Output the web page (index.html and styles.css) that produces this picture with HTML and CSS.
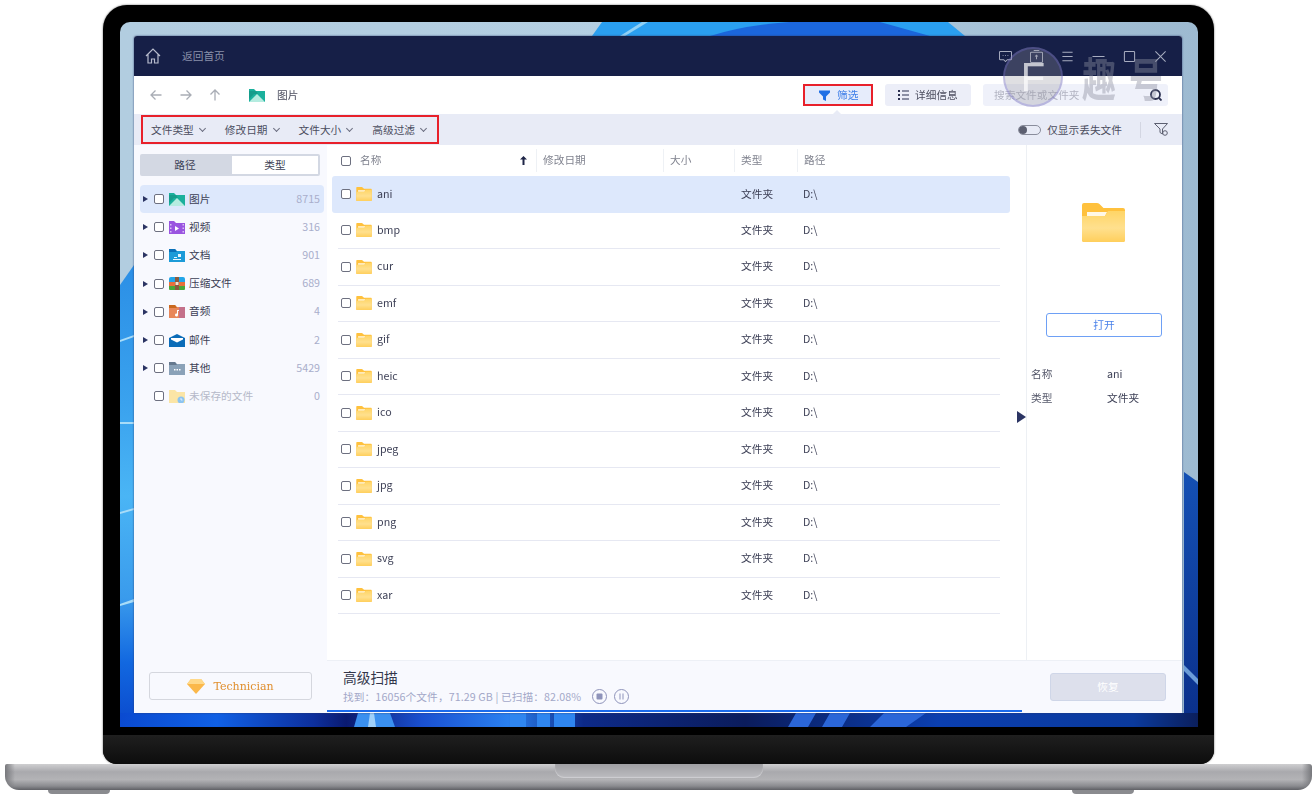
FILE: index.html
```html
<!DOCTYPE html>
<html lang="zh-CN">
  <head>
    <meta charset="UTF-8" />
    <title>高级扫描</title>
    <link rel="stylesheet" href="styles.css">
  </head>
  <body>
    <svg class="defs" width="0" height="0">
      <defs>
        <linearGradient id="folderBody" x1="0" y1="0" x2="0" y2="1">
          <stop offset="0" stop-color="#ffd566" />
          <stop offset="0.55" stop-color="#ffe08e" />
          <stop offset="1" stop-color="#ffcf5c" />
        </linearGradient>
        <symbol id="folder" viewBox="0 0 43 39">
          <path d="M2 0h13q2 0 3.500 2l3 3H41q2 0 2 2v30q0 2-2 2H2q-2 0-2-2V2q0-2 2-2z" fill="#ffc13d" />
          <path d="M5 9h20l-2 4H5z" fill="#fff8e6" />
          <path d="M0 13h23l3-5h17v29q0 2-2 2H2q-2 0-2-2z" fill="url(#folderBody)" />
        </symbol>
        <symbol id="pics" viewBox="0 0 16 13">
          <path d="M0 0h5l2 2h9v11H0z" fill="#1ab09c" />
          <path d="M0 13l8-8 8 8z" fill="#b5ece0" />
          <path d="M0 2h7l2 3H5L0 10z" fill="#128f80" opacity=".6" />
        </symbol>
      </defs>
    </svg>

    <div class="laptop">
      <div class="lid">
        <div class="screen">
          <svg class="wallpaper" viewBox="0 0 1078 705" preserveAspectRatio="none">
            <defs>
              <linearGradient id="wallSky" x1="0" y1="0" x2="1" y2="0">
                <stop offset="0" stop-color="#b2cde0" />
                <stop offset="0.5" stop-color="#b4cfe2" />
                <stop offset="1" stop-color="#9dbad1" />
              </linearGradient>
              <linearGradient id="wallLeft" x1="0" y1="0" x2="0" y2="1">
                <stop offset="0" stop-color="#2b8fe6" />
                <stop offset="0.3" stop-color="#3aa2ee" />
                <stop offset="0.5" stop-color="#4ab5f5" />
                <stop offset="0.72" stop-color="#3a9bec" />
                <stop offset="0.86" stop-color="#1268e0" />
                <stop offset="1" stop-color="#0a48cc" />
              </linearGradient>
              <linearGradient id="wallRight" x1="0" y1="0" x2="0" y2="1">
                <stop offset="0" stop-color="#1450b4" />
                <stop offset="1" stop-color="#0a2f8a" />
              </linearGradient>
              <linearGradient id="wallBottom" x1="0" y1="0" x2="1" y2="0">
                <stop offset="0" stop-color="#0a4ad0" />
                <stop offset="0.09" stop-color="#1060e4" />
                <stop offset="0.18" stop-color="#0d2f9c" />
                <stop offset="0.21" stop-color="#0a1a70" />
                <stop offset="0.28" stop-color="#1a50d0" />
                <stop offset="0.36" stop-color="#2a80f0" />
                <stop offset="0.43" stop-color="#0d2a88" />
                <stop offset="0.58" stop-color="#0b1c5c" />
                <stop offset="0.76" stop-color="#0b3fb0" />
                <stop offset="0.94" stop-color="#0b3a9c" />
                <stop offset="1" stop-color="#0b1f5c" />
              </linearGradient>
            </defs>
            <rect width="1078" height="705" fill="url(#wallSky)" />
            <path d="M482 0H828L845 14H472z" fill="#2a9ff0" />
            <path d="M590 14Q650-6 760 0L810 14z" fill="#1b66dc" />
            <path d="M522 0L500 14h5L528 0z" fill="#8fd0f5" />
            <path d="M0 263L14 243V705H0z" fill="url(#wallLeft)" />
            <path d="M0 318l14-5v2L0 320zM0 400h14v2H0zM0 490l14-4v2L0 492zM0 582l14-5v3L0 584z" fill="#a8dcf8" />
            <path d="M1064 450l14 10v245h-14z" fill="url(#wallRight)" />
            <path d="M1064 643l14 14v6l-14-14z" fill="#6b9cd8" />
            <rect y="691" width="1078" height="14" fill="url(#wallBottom)" />
            <path d="M234 705l4-14h32l5 14z" fill="#3a90f0" />
            <path d="M248 705l2-14h4l2 14z" fill="#9fd0fa" />
            <path d="M390 705v-14h16v14zM417 705v-14h13v14zM434 705v-14h21v14z" fill="#2f86f0" />
            <path d="M668 705l8-14h20l-8 14zM702 705l8-14h20l-8 14zM750 705l14-14h42l-20 14z" fill="#2b66d8" />
          </svg>

          <div class="window">
            <header class="titlebar">
              <svg class="ic-home" viewBox="0 0 16 16"><path d="M1 8l7-7 7 7M3 6.500V15h3.500v-4h3v4H13V6.500" /></svg>
              <span class="back-home">返回首页</span>
              <div class="title-actions">
                <svg viewBox="0 0 14 14"><path d="M1.500 1.500h11q1 0 1 1v7q0 1-1 1H9l-2 2-2-2H1.500q-1 0-1-1v-7q0-1 1-1z" /><path d="M4 6h.8M6.600 6h.8M9.200 6h.8" /></svg>
                <svg viewBox="0 0 14 14"><path d="M1.500 2.500h11q1 0 1 1v9q0 1-1 1h-11q-1 0-1-1v-9q0-1 1-1zM4 .5h6M7 10V5.500M5.500 7L7 5.500 8.500 7" /></svg>
                <svg viewBox="0 0 14 14"><path d="M1.500 2.500h11M1.500 7h11M1.500 11.500h11" /></svg>
                <svg viewBox="0 0 14 14"><path d="M.5 7h13" /></svg>
                <svg viewBox="0 0 14 14"><rect x="1.500" y="1.500" width="11" height="11" rx="1" /></svg>
                <svg viewBox="0 0 14 14"><path d="M1.500 1.500l11 11M12.500 1.500l-11 11" /></svg>
              </div>
            </header>

            <div class="toolbar">
              <svg class="ic-nav" viewBox="0 0 12 12"><path d="M11.500 6H1M5.500 1.500L1 6l4.500 4.500" /></svg>
              <svg class="ic-nav" viewBox="0 0 12 12"><path d="M.5 6H11M6.500 1.500L11 6l-4.500 4.500" /></svg>
              <svg class="ic-nav" viewBox="0 0 12 12"><path d="M6 11.500V1M1.500 5.500L6 1l4.500 4.500" /></svg>
              <svg class="ic-crumb"><use href="#pics" /></svg>
              <span class="crumb">图片</span>
              <button class="tool-btn filter-btn">
                <svg viewBox="0 0 11 11"><path d="M0 .5h11v2L7 6.500V11L4 9.500v-3L0 2.500z" /></svg>
                <span>筛选</span>
              </button>
              <button class="tool-btn detail-btn">
                <svg viewBox="0 0 11 10"><path d="M0 0h2v2H0zM4 .4h7v1.200H4zM0 4h2v2H0zM4 4.400h7v1.200H4zM0 8h2v2H0zM4 8.400h7v1.200H4z" /></svg>
                <span>详细信息</span>
              </button>
              <div class="search">
                <span>搜索文件或文件夹</span>
                <svg viewBox="0 0 12 12"><circle cx="5.500" cy="5.500" r="4.500" /><path d="M9 9l2.500 2.500" /></svg>
              </div>
            </div>

            <div class="filterbar">
              <div class="filter-group">
                <span class="filter-item">文件类型<i class="chev"></i></span>
                <span class="filter-item">修改日期<i class="chev"></i></span>
                <span class="filter-item">文件大小<i class="chev"></i></span>
                <span class="filter-item">高级过滤<i class="chev"></i></span>
              </div>
              <div class="lost-toggle"><i class="switch"></i>仅显示丢失文件</div>
              <span class="vline"></span>
              <svg class="ic-clear" viewBox="0 0 14 13"><path d="M.5.500h13L8.500 6v5L6 9.500V6z" /><circle cx="11" cy="10" r="2.300" /></svg>
            </div>

            <div class="main">
              <aside class="sidebar">
                <div class="segment"><span class="seg-off">路径</span><span class="seg-on">类型</span></div>
                <ul class="tree">
                  <li class="tree-row active">
                    <i class="caret"></i><i class="check"></i>
                    <svg class="cat"><use href="#pics" /></svg>
                    <span class="cat-name">图片</span><span class="count">8715</span>
                  </li>
                  <li class="tree-row">
                    <i class="caret"></i><i class="check"></i>
                    <svg class="cat" viewBox="0 0 16 13"><path d="M0 0h5l2 2h9v11H0z" fill="#9a55e0" /><path d="M6 5l4 2.500L6 10z" fill="#fff" /><path d="M1 3h1.500v1.500H1zM1 6.500h1.500V8H1zM1 10h1.500v1.500H1zM13.500 3H15v1.500h-1.500zM13.500 6.500H15V8h-1.500zM13.500 10H15v1.500h-1.500z" fill="#d9c0f5" /></svg>
                    <span class="cat-name">视频</span><span class="count">316</span>
                  </li>
                  <li class="tree-row">
                    <i class="caret"></i><i class="check"></i>
                    <svg class="cat" viewBox="0 0 16 13"><path d="M0 0h6l2 2h8v11H0z" fill="#1c9bd8" /><path d="M0 0h6l2 3H0z" fill="#0b70b8" /><path d="M9 5h3v3H9zM5 8h3v1H5zM4 10h8v1H4z" fill="#e6f6ff" /></svg>
                    <span class="cat-name">文档</span><span class="count">901</span>
                  </li>
                  <li class="tree-row">
                    <i class="caret"></i><i class="check"></i>
                    <svg class="cat" viewBox="0 0 16 13"><path d="M0 2q0-2 2-2h12q2 0 2 2v3H0z" fill="#22a5e8" /><rect y="5" width="16" height="4" fill="#e8703a" /><path d="M0 9h16v3q0 1-1 1H1q-1 0-1-1z" fill="#4aa838" /><rect x="6" width="4" height="13" fill="#8a5a3c" /><rect x="6.500" y="5" width="3" height="3" fill="#f2e3cf" /></svg>
                    <span class="cat-name">压缩文件</span><span class="count">689</span>
                  </li>
                  <li class="tree-row">
                    <i class="caret"></i><i class="check"></i>
                    <svg class="cat" viewBox="0 0 16 13"><path d="M0 0h6l2 2h8v11H0z" fill="#e8875a" /><path d="M0 0h6l2 3H0z" fill="#c9691f" /><rect x="10" y="2" width="6" height="11" fill="#c4708a" /><path d="M8 5h2v1H9v4a1.500 1.500 0 1 1-1-1.400z" fill="#fff" /></svg>
                    <span class="cat-name">音频</span><span class="count">4</span>
                  </li>
                  <li class="tree-row">
                    <i class="caret"></i><i class="check"></i>
                    <svg class="cat" viewBox="0 0 16 13"><path d="M0 4l8-4 8 4v9H0z" fill="#0b6cb8" /><path d="M2 4h12v1.500L8 8.500 2 5.500z" fill="#fff" /></svg>
                    <span class="cat-name">邮件</span><span class="count">2</span>
                  </li>
                  <li class="tree-row">
                    <i class="caret"></i><i class="check"></i>
                    <svg class="cat" viewBox="0 0 16 13"><path d="M0 0h6l2 2h8v11H0z" fill="#8ba2b8" /><path d="M0 0h6l2 3H0z" fill="#66798f" /><path d="M5 7h1.500v1.500H5zM7.500 7H9v1.500H7.500zM10 7h1.500v1.500H10z" fill="#fff" /></svg>
                    <span class="cat-name">其他</span><span class="count">5429</span>
                  </li>
                  <li class="tree-row unsaved">
                    <i class="caret none"></i><i class="check"></i>
                    <svg class="cat" viewBox="0 0 16 13"><path d="M0 0h6l2 2h8v11H0z" fill="#fbe5a6" /><circle cx="12" cy="10" r="3.500" fill="#8cc4f0" /><path d="M12 8v2h1.500" stroke="#fff" stroke-width=".7" fill="none" /></svg>
                    <span class="cat-name">未保存的文件</span><span class="count">0</span>
                  </li>
                </ul>
                <button class="tech-btn">
                  <svg viewBox="0 0 18 15"><path d="M4 0h10l4 5-9 10L0 5z" fill="#fbb84a" /><path d="M4 0h10l4 5H0z" fill="#ffd98a" /></svg>
                  Technician
                </button>
              </aside>

              <section class="listing">
                <div class="table-head">
                  <div class="th th-name">
                    <i class="check"></i><span>名称</span>
                    <svg class="sort" viewBox="0 0 7 9"><path d="M3.500 0L7 3.500H4.500V9h-2V3.500H0z" /></svg>
                  </div>
                  <div class="th th-date">修改日期</div>
                  <div class="th th-size">大小</div>
                  <div class="th th-type">类型</div>
                  <div class="th th-path">路径</div>
                </div>
                <ul class="rows">
                  <li class="row active"><i class="check"></i><svg class="fld"><use href="#folder" /></svg><span class="name">ani</span><span class="type">文件夹</span><span class="path">D:\</span></li>
                  <li class="row"><i class="check"></i><svg class="fld"><use href="#folder" /></svg><span class="name">bmp</span><span class="type">文件夹</span><span class="path">D:\</span></li>
                  <li class="row"><i class="check"></i><svg class="fld"><use href="#folder" /></svg><span class="name">cur</span><span class="type">文件夹</span><span class="path">D:\</span></li>
                  <li class="row"><i class="check"></i><svg class="fld"><use href="#folder" /></svg><span class="name">emf</span><span class="type">文件夹</span><span class="path">D:\</span></li>
                  <li class="row"><i class="check"></i><svg class="fld"><use href="#folder" /></svg><span class="name">gif</span><span class="type">文件夹</span><span class="path">D:\</span></li>
                  <li class="row"><i class="check"></i><svg class="fld"><use href="#folder" /></svg><span class="name">heic</span><span class="type">文件夹</span><span class="path">D:\</span></li>
                  <li class="row"><i class="check"></i><svg class="fld"><use href="#folder" /></svg><span class="name">ico</span><span class="type">文件夹</span><span class="path">D:\</span></li>
                  <li class="row"><i class="check"></i><svg class="fld"><use href="#folder" /></svg><span class="name">jpeg</span><span class="type">文件夹</span><span class="path">D:\</span></li>
                  <li class="row"><i class="check"></i><svg class="fld"><use href="#folder" /></svg><span class="name">jpg</span><span class="type">文件夹</span><span class="path">D:\</span></li>
                  <li class="row"><i class="check"></i><svg class="fld"><use href="#folder" /></svg><span class="name">png</span><span class="type">文件夹</span><span class="path">D:\</span></li>
                  <li class="row"><i class="check"></i><svg class="fld"><use href="#folder" /></svg><span class="name">svg</span><span class="type">文件夹</span><span class="path">D:\</span></li>
                  <li class="row"><i class="check"></i><svg class="fld"><use href="#folder" /></svg><span class="name">xar</span><span class="type">文件夹</span><span class="path">D:\</span></li>
                </ul>
                <i class="collapse"></i>
              </section>

              <aside class="preview">
                <svg class="big-folder"><use href="#folder" /></svg>
                <button class="open-btn"><span>打开</span></button>
                <dl class="props">
                  <dt>名称</dt><dd>ani</dd>
                  <dt>类型</dt><dd>文件夹</dd>
                </dl>
              </aside>

              <footer class="statusbar">
                <div class="scan-info">
                  <div class="scan-title">高级扫描</div>
                  <div class="scan-line">
                    <span>找到：16056个文件，71.29 GB | 已扫描：82.08%</span>
                    <svg viewBox="0 0 15 15"><circle cx="7.500" cy="7.500" r="7" /><rect x="4.500" y="4.500" width="6" height="6" rx="1" class="fill" /></svg>
                    <svg viewBox="0 0 15 15"><circle cx="7.500" cy="7.500" r="7" /><path d="M6 4.500v6M9 4.500v6" /></svg>
                  </div>
                </div>
                <button class="recover-btn"><span>恢复</span></button>
                <div class="progress"></div>
              </footer>
            </div>

            <div class="watermark">
              <span class="wm-circle">F</span>
              <span class="wm-text">趣</span>
              <span class="wm-text">号</span>
            </div>
          </div>
        </div>
        <div class="chin"></div>
      </div>
      <div class="base"><div class="notch"></div></div>
      <div class="feet"><i></i><i></i></div>
    </div>
  </body>
</html>
```

FILE: styles.css
```css
* {
  box-sizing: border-box;
}
html,
body {
  margin: 0;
  padding: 0;
}
body {
  width: 1316px;
  height: 802px;
  overflow: hidden;
  background: #fff;
  font-family: "Noto Sans CJK SC", "Noto Sans", sans-serif;
  font-size: 10.700px;
  color: #3c3f55;
}
ul,
dl,
dd {
  margin: 0;
  padding: 0;
  list-style: none;
}
button {
  font: inherit;
  padding: 0;
}
.defs {
  position: absolute;
}

/* laptop shell */
.laptop {
  padding: 5px 4px 0 5px;
}
.lid {
  width: 1111px;
  height: 759px;
  margin-left: 98px;
  padding: 17px 16px 0 17px;
  background: #000;
  border-radius: 24px 24px 14px 14px;
  box-shadow: 0 0 2px #555;
}
.screen {
  position: relative;
  width: 1078px;
  height: 705px;
  padding: 14px 16px 14px 14px;
  border-radius: 10px 10px 0 0;
  overflow: hidden;
}
.wallpaper {
  position: absolute;
  top: 0;
  left: 0;
  width: 1078px;
  height: 705px;
}
.chin {
  height: 29px;
  margin: 8px -16px 0 -17px;
  background: linear-gradient(#1f1f1f, #0d0d0d);
  border-radius: 0 0 14px 14px;
}
.base {
  display: flex;
  justify-content: center;
  height: 26px;
  background:
    linear-gradient(90deg, #77787c, rgba(255, 255, 255, 0) 10px, rgba(255, 255, 255, 0) 1297px, #77787c),
    linear-gradient(#cfcfd1, #a9a9ad 30%, #b3b3b6 60%, #8a8b8f 85%, #5f6065);
  border-radius: 2px 3px 14px 14px;
}
.notch {
  width: 208px;
  height: 14px;
  background: linear-gradient(#a0a0a4, #bcbcc0);
  border-radius: 0 0 9px 9px;
  box-shadow: inset 0 -1px 1px #d0d0d3;
}
.feet {
  display: flex;
  justify-content: space-between;
  padding: 0 178px 0 43px;
}
.feet i {
  width: 62px;
  height: 4px;
  background: #8a8b8f;
  border-radius: 0 0 8px 8px;
}

/* app window */
.window {
  position: relative;
  display: flex;
  flex-direction: column;
  width: 1048px;
  height: 677px;
  background: #fff;
  border-radius: 3px;
  box-shadow: 0 0 2px #2c3a6e;
  filter: blur(0.3px);
}
.titlebar {
  display: flex;
  align-items: center;
  height: 40px;
  padding: 0 15px 0 11px;
  background: #161f47;
  border-radius: 3px 3px 0 0;
  color: #8990aa;
}
.ic-home {
  width: 16px;
  height: 16px;
  fill: none;
  stroke: #b8bccd;
  stroke-width: 1.200;
}
.back-home {
  margin: -2px 0 0 21px;
}
.title-actions {
  display: flex;
  align-items: center;
  gap: 18px;
  margin-left: auto;
}
.title-actions svg {
  width: 13px;
  height: 13px;
  fill: none;
  stroke: #a8adc0;
  stroke-width: 1.100;
}
.toolbar {
  display: flex;
  align-items: center;
  height: 38px;
  padding: 0 14px 0 16px;
}
.ic-nav {
  width: 12px;
  height: 12px;
  margin-right: 17.500px;
  fill: none;
  stroke: #a9adb5;
  stroke-width: 1.300;
}
.ic-crumb {
  width: 16px;
  height: 13px;
  margin-left: 10.500px;
}
.crumb {
  margin: -2px 0 0 12px;
  color: #4b4d5e;
}
.tool-btn {
  display: flex;
  align-items: center;
  height: 22px;
  border: 0;
  border-radius: 3px;
  color: #4b4d5e;
}
.tool-btn span {
  margin-top: -2px;
}
.filter-btn {
  width: 70px;
  margin-left: auto;
  padding-left: 14px;
  gap: 7px;
  background: #e6ecfb;
  border: 2px solid #e8202a;
  border-radius: 0;
  color: #3f7fe8;
}
.filter-btn svg {
  width: 11px;
  height: 11px;
  fill: #1f6fe5;
}
.filter-btn::after {
  content: "";
  position: absolute;
  top: 74px;
  left: 698px;
  border: 5px solid transparent;
  border-top: 0;
  border-bottom-color: #e8ebf6;
}
.detail-btn {
  width: 86px;
  margin-left: 12px;
  padding-left: 13px;
  gap: 6px;
  background: #eceef8;
}
.detail-btn svg {
  width: 11px;
  height: 10px;
  fill: #2b3050;
}
.search {
  display: flex;
  align-items: center;
  justify-content: space-between;
  width: 185px;
  height: 22px;
  margin-left: 12px;
  padding: 0 6px 0 11px;
  background: #eff1fa;
  border-radius: 3px;
  color: #b2b4c2;
}
.search span {
  margin-top: -2px;
}
.search svg {
  width: 12px;
  height: 12px;
  fill: none;
  stroke: #2b3050;
  stroke-width: 1.800;
}
.filterbar {
  display: flex;
  align-items: center;
  height: 31px;
  padding: 0 14px 0 7px;
  background: #e8ebf6;
}
.filter-group {
  display: flex;
  align-items: center;
  gap: 19px;
  width: 298px;
  height: 29px;
  padding-left: 8px;
  border: 2px solid #e8202a;
}
.filter-item {
  display: flex;
  align-items: center;
  gap: 5px;
  color: #4b4d5e;
}
.chev {
  width: 5px;
  height: 5px;
  margin: -3px 1px 0 1px;
  border-right: 1px solid #6b6e80;
  border-bottom: 1px solid #6b6e80;
  transform: rotate(45deg);
}
.lost-toggle {
  display: flex;
  align-items: center;
  gap: 6px;
  margin-left: auto;
  color: #4b4d5e;
}
.switch {
  position: relative;
  width: 23px;
  height: 10px;
  border: 1px solid #8a8d9c;
  border-radius: 5px;
}
.switch::before {
  content: "";
  position: absolute;
  top: 0;
  left: 0;
  width: 8px;
  height: 8px;
  background: #5c5f70;
  border-radius: 50%;
}
.vline {
  width: 1px;
  height: 16px;
  margin: 0 13px 0 18px;
  background: #d3d6e2;
}
.ic-clear {
  width: 14px;
  height: 13px;
  fill: none;
  stroke: #5c5f70;
  stroke-width: 1;
}

/* main area */
.main {
  position: relative;
  display: grid;
  flex: 1;
  grid-template-columns: 193px 699px 156px;
  grid-template-rows: 515px 53px;
  min-height: 0;
}
.sidebar {
  display: flex;
  flex-direction: column;
  grid-row: 1 / 3;
  padding: 9px 3px 0 6px;
  background: #f8f9fe;
}
.segment {
  display: flex;
  width: 180px;
  height: 22px;
  border: 2px solid #d3d8e3;
  border-radius: 2px;
  text-align: center;
  line-height: 18px;
}
.seg-off {
  width: 90px;
  padding-right: 4px;
  background: #d3d8e3;
}
.seg-on {
  flex: 1;
  background: #fff;
}
.tree {
  margin-top: 9px;
}
.tree-row {
  display: flex;
  align-items: center;
  height: 28.200px;
  padding: 0 4px 0 3px;
  color: #3c3f55;
  border-radius: 4px;
}
.tree-row.active {
  background: #dde8fc;
}
.cat-name,
.count {
  margin-top: -2px;
}
.caret {
  width: 0;
  height: 0;
  border-left: 5px solid #2b3463;
  border-top: 3.500px solid transparent;
  border-bottom: 3.500px solid transparent;
}
.caret.none {
  border-left-color: transparent;
}
.check {
  flex: none;
  width: 10px;
  height: 10px;
  background: #fff;
  border: 1px solid #6d7080;
  border-radius: 2px;
}
.tree-row .check {
  margin-left: 6px;
}
.cat {
  width: 16px;
  height: 13px;
  margin: 0 4px 0 5px;
}
.count {
  margin-left: auto;
  color: #a9aecb;
}
.unsaved .cat-name {
  color: #b6b9c9;
}
.tech-btn {
  display: flex;
  align-items: center;
  justify-content: center;
  gap: 8px;
  width: 163px;
  height: 28px;
  margin: auto 0 13px 9px;
  background: transparent;
  border: 1px solid #d5d7de;
  border-radius: 3px;
  font-family: "DejaVu Serif", "Liberation Serif", serif;
  font-size: 11px;
  color: #e08f2e;
}
.tech-btn svg {
  width: 18px;
  height: 15px;
}
.listing {
  position: relative;
  padding: 4px 0 0 5px;
}
.table-head {
  display: flex;
  height: 27px;
  color: #80838f;
}
.th {
  display: flex;
  align-items: center;
  height: 23px;
  padding: 0 0 2px 6px;
  border-right: 1px solid #eef1f5;
}
.th-name {
  width: 205px;
  padding-left: 9px;
}
.th-name span {
  margin-left: 9px;
}
.th-name .check {
  margin-top: 2px;
}
.th-date {
  width: 127px;
}
.th-size {
  width: 71px;
}
.th-type {
  width: 63px;
}
.th-path {
  flex: none;
  width: 60px;
  border: 0;
}
.sort {
  width: 7px;
  height: 9px;
  margin: 2px 9px 0 auto;
  fill: #1e2547;
}
.rows {
  width: 678px;
}
.row {
  display: flex;
  align-items: center;
  height: 36.500px;
  margin-right: 10px;
  margin-left: 6px;
  border-bottom: 1px solid #e6e8f2;
  color: #3c3f55;
}
.row .check {
  margin-left: 3px;
}
.row.active {
  margin: 0;
  padding-left: 6px;
  border: 0;
  border-radius: 3px;
  background: #dde8fc;
}
.fld {
  width: 16px;
  height: 14px;
  margin-left: 5px;
}
.name,
.type,
.path {
  margin-top: -2px;
}
.name {
  width: 364px;
  margin-left: 5px;
}
.type {
  width: 62px;
}
.collapse {
  position: absolute;
  top: 266px;
  right: 0;
  border-left: 9px solid #2b3463;
  border-top: 6px solid transparent;
  border-bottom: 6px solid transparent;
}
.preview {
  display: flex;
  flex-direction: column;
  border-left: 1px solid #edf0f4;
  padding-top: 58px;
}
.big-folder {
  width: 43px;
  height: 39px;
  margin-left: 55px;
}
.open-btn {
  width: 116px;
  height: 24px;
  margin: 71px 0 0 19px;
  background: #fff;
  border: 1px solid #6ea0f5;
  border-radius: 3px;
  color: #4a82ea;
}
.open-btn span,
.recover-btn span {
  position: relative;
  top: -1px;
}
.props {
  display: grid;
  grid-template-columns: 76px 1fr;
  row-gap: 8px;
  margin: 29px 0 0 4px;
  line-height: 16px;
}
.props dt {
  color: #55586a;
}
.statusbar {
  position: relative;
  display: flex;
  justify-content: space-between;
  grid-column: 2 / 4;
  padding: 7px 16px 0 16px;
  background: #f8f9fe;
  border-top: 1px solid #edf0f6;
}
.scan-title {
  font-size: 13.700px;
  line-height: 18px;
  color: #33364a;
}
.scan-line {
  display: flex;
  align-items: center;
  gap: 7px;
  margin-top: 3px;
  letter-spacing: 0.100px;
  color: #a3a8c8;
}
.scan-line svg {
  width: 15px;
  height: 15px;
  fill: none;
  stroke: #8e93ba;
  stroke-width: 1;
}
.scan-line svg:first-of-type {
  margin-left: 4px;
}
.scan-line .fill {
  fill: #8e93ba;
  stroke: none;
}
.recover-btn {
  width: 116px;
  height: 28px;
  margin-top: 5px;
  background: #dde0ec;
  border: 1px solid #cfd6e8;
  border-radius: 3px;
  color: #fff;
}
.progress {
  position: absolute;
  left: 0;
  bottom: 1px;
  width: 695px;
  height: 2px;
  background: #1a6bec;
}

/* watermark sits over the toolbar */
.watermark {
  position: absolute;
  top: 11px;
  left: 869px;
  display: flex;
  align-items: center;
  pointer-events: none;
}
.wm-circle {
  width: 60px;
  height: 60px;
  background: rgba(150, 150, 160, 0.3);
  border: 2px solid rgba(120, 110, 220, 0.3);
  border-radius: 50%;
  font-family: "Liberation Sans", sans-serif;
  font-size: 40px;
  line-height: 56px;
  text-align: center;
  color: rgba(255, 255, 255, 0.7);
}
.wm-text {
  margin-left: 19px;
  font-size: 34px;
  font-weight: 700;
  line-height: 50px;
  color: rgba(140, 142, 160, 0.42);
  transform: scaleY(1.350);
}
.wm-text + .wm-text {
  margin-left: 13px;
}
```
